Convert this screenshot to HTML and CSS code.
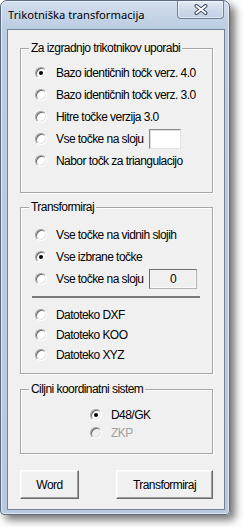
FILE: index.html
```html
<!DOCTYPE html>
<html>
<head>
<meta charset="utf-8">
<link rel="stylesheet" href="styles.css">
</head>
<body>
<div class="window">
  <div class="titlebar">
    <span class="title">Trikotniška transformacija</span>
    <div class="close">
      <svg width="14" height="11" viewBox="0 0 14 11">
        <path d="M2.5 2 L11.5 9 M11.5 2 L2.5 9" stroke="#3d4b60" stroke-width="4" stroke-linecap="round" fill="none"/>
        <path d="M2.5 2 L11.5 9 M11.5 2 L2.5 9" stroke="#ffffff" stroke-width="2" stroke-linecap="round" fill="none"/>
      </svg>
    </div>
  </div>
  <div class="client">
    <div class="group g1">
      <div class="legend">Za izgradnjo trikotnikov uporabi</div>
      <div class="rows r1">
        <div class="row"><span class="radio on"><span class="dot"></span></span><span class="lbl">Bazo identičnih točk verz. 4.0</span></div>
        <div class="row"><span class="radio"></span><span class="lbl">Bazo identičnih točk verz. 3.0</span></div>
        <div class="row"><span class="radio"></span><span class="lbl">Hitre točke verzija 3.0</span></div>
        <div class="row"><span class="radio"></span><span class="lbl fixed">Vse točke na sloju</span><span class="edit"></span></div>
        <div class="row"><span class="radio"></span><span class="lbl">Nabor točk za triangulacijo</span></div>
      </div>
    </div>

    <div class="group g2">
      <div class="legend">Transformiraj</div>
      <div class="rows r2">
        <div class="row"><span class="radio"></span><span class="lbl">Vse točke na vidnih slojih</span></div>
        <div class="row"><span class="radio on"><span class="dot"></span></span><span class="lbl">Vse izbrane točke</span></div>
        <div class="row"><span class="radio"></span><span class="lbl fixed">Vse točke na sloju</span><span class="static">0</span></div>
      </div>
      <div class="sep"></div>
      <div class="rows r2b">
        <div class="row"><span class="radio"></span><span class="lbl">Datoteko DXF</span></div>
        <div class="row"><span class="radio"></span><span class="lbl">Datoteko KOO</span></div>
        <div class="row"><span class="radio"></span><span class="lbl">Datoteko XYZ</span></div>
      </div>
    </div>

    <div class="group g3">
      <div class="legend">Ciljni koordinatni sistem</div>
      <div class="rows r3">
        <div class="row"><span class="radio on"><span class="dot"></span></span><span class="lbl">D48/GK</span></div>
        <div class="row disabled"><span class="radio dis"></span><span class="lbl">ZKP</span></div>
      </div>
    </div>

    <div class="buttons">
      <button class="btn word">Word</button>
      <button class="btn trans">Transformiraj</button>
    </div>
  </div>
</div>
</body>
</html>
```

FILE: styles.css
```css
html, body {
  margin: 0;
  padding: 0;
  background: #ffffff;
}

body {
  width: 244px;
  height: 527px;
  overflow: hidden;
}

.window {
  width: 230px;
  height: 515px;
  box-sizing: border-box;
  border: 1px solid #5a6a80;
  border-radius: 7px 7px 4px 4px;
  background: linear-gradient(#d3dfee 0px, #c6d5e8 14px, #bccde2 28px, #b9cadf 100%);
  box-shadow: inset 0 0 0 1px rgba(255,255,255,0.55), 5px 5px 8px rgba(0,0,0,0.55);
  display: flex;
  flex-direction: column;
}

.titlebar {
  height: 28px;
  flex: none;
  display: flex;
  justify-content: space-between;
  align-items: flex-start;
}

.title {
  font-family: "Noto Sans", "Open Sans", sans-serif;
  font-size: 11.2px;
  color: #000;
  padding: 6px 0 0 7px;
  line-height: 16px;
}

.close {
  width: 47px;
  height: 18px;
  box-sizing: border-box;
  margin-right: 5px;
  border: 1px solid #6f8099;
  border-top: none;
  border-radius: 0 0 4px 4px;
  background: linear-gradient(#e3ebf5, #cbd7e7 60%, #c2d0e3);
  box-shadow: inset 0 0 0 1px rgba(255,255,255,0.5);
  display: flex;
  align-items: center;
  justify-content: center;
}

.client {
  height: 481px;
  margin: 0 4px 4px 6px;
  box-sizing: border-box;
  border: 1px solid #71829a;
  background: #f0f0f0;
  display: flex;
  flex-direction: column;
  font-family: "Liberation Sans", Arial, sans-serif;
  font-size: 12px;
  letter-spacing: -0.55px;
  color: #000;
}

.group {
  margin: 0 11px 0 12px;
  border: 1px solid #a5a5a5;
  box-shadow: 1px 1px 0 #fff, inset 1px 1px 0 #fff;
}

.g1 { margin-top: 18px; }
.g2 { margin-top: 14px; }
.g3 { margin-top: 15px; }

.legend {
  width: fit-content;
  margin: -7px 0 0 8px;
  padding: 0 2px;
  height: 13px;
  line-height: 13px;
  background: #f0f0f0;
  white-space: nowrap;
}

.rows {
  display: flex;
  flex-direction: column;
}

.r1 { padding: 7px 0 20px 14px; }
.r1 .row { height: 22px; }

.r2 { padding: 10px 0 0 14px; }
.r2 .row { height: 22px; }

.sep {
  height: 2px;
  margin: 6px 12px 0 11px;
  background: #7c7c7c;
}

.r2b { padding: 7px 0 8px 14px; }
.r2b .row { height: 20px; }

.r3 { padding: 10px 0 11px 69px; }
.r3 .row { height: 18px; }

.row {
  display: flex;
  align-items: center;
  white-space: nowrap;
}

.radio {
  width: 12px;
  height: 12px;
  flex: none;
  box-sizing: border-box;
  border-radius: 50%;
  background: #ffffff;
  border: 1px solid;
  border-color: #a0a0a0 #ffffff #ffffff #a0a0a0;
  box-shadow: inset 1px 1px 0 #6a6a6a, inset -1px -1px 0 #e3e3e3;
  display: flex;
  align-items: center;
  justify-content: center;
}

.radio.dis {
  background: #f0f0f0;
}

.dot {
  width: 4px;
  height: 4px;
  border-radius: 50%;
  background: #000;
}

.lbl {
  margin-left: 9px;
}

.lbl.fixed {
  width: 93px;
  flex: none;
}

.disabled .lbl {
  color: #a0a0a0;
}

.edit {
  width: 32px;
  height: 20px;
  box-sizing: border-box;
  background: #ffffff;
  border: 1px solid;
  border-color: #8a8a8a #e3e3e3 #e3e3e3 #8a8a8a;
  box-shadow: inset 1px 1px 0 #dcdcdc;
}

.static {
  width: 48px;
  height: 20px;
  box-sizing: border-box;
  background: #f0f0f0;
  border: 1px solid;
  border-color: #6e6e6e #b4b4b4 #b4b4b4 #6e6e6e;
  box-shadow: inset -1px -1px 0 #f8f8f8;
  display: flex;
  align-items: center;
  justify-content: center;
}

.buttons {
  display: flex;
  margin: 16px 0 0 12px;
  gap: 37px;
}

.btn {
  height: 29px;
  box-sizing: border-box;
  padding: 0;
  font-family: "Liberation Sans", Arial, sans-serif;
  font-size: 12px;
  letter-spacing: -0.55px;
  color: #000;
  background: #f0f0f0;
  border: 1px solid;
  border-color: #ffffff #696969 #696969 #ffffff;
  box-shadow: inset -1px -1px 0 #a0a0a0, inset 1px 1px 0 #f8f8f8;
  border-radius: 0;
}

.word { width: 59px; }
.trans { width: 97px; }
```
